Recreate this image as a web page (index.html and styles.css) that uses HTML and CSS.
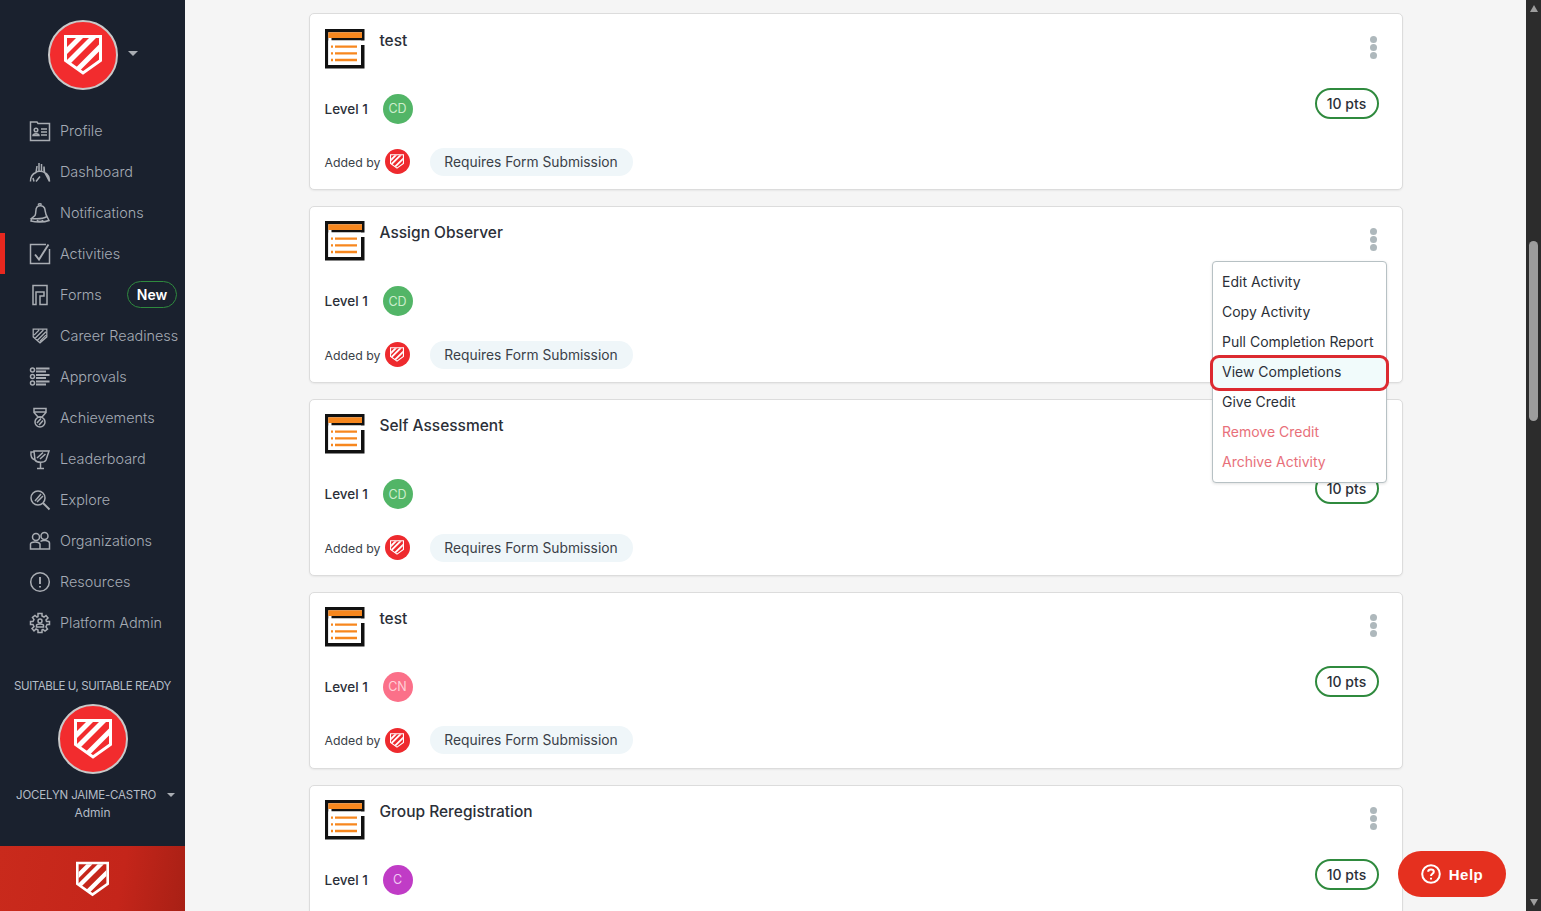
FILE: index.html
```html
<!DOCTYPE html>
<html lang="en">
<head>
<meta charset="utf-8">
<title>Activities</title>
<link rel="stylesheet" href="styles.css">
</head>
<body>
<svg class="defs" width="0" height="0" aria-hidden="true">
  <defs>
    <symbol id="shield" viewBox="0 0 38 40">
      <path d="M1.500 1.500H36.500V25.500L19 38L1.500 25.500Z" fill="none" stroke="#fff" stroke-width="3"/>
      <path d="M3 12 12 3H19L3 19ZM3 25 25 3H32L6 29ZM11.500 33 35 9.500V16.500L16.500 35Z" fill="#fff"/>
    </symbol>
    <symbol id="form" viewBox="0 0 40 40">
      <path d="M0 0H39.500V11.500H6.500V9H37V3.300H3.300V36H36V16H39.500V39.500H0Z" fill="#111"/>
      <rect x="3.300" y="11.500" width="32.700" height="24.500" fill="#fff"/>
      <rect x="3.300" y="3.300" width="33.700" height="5.700" fill="#f7871e"/>
      <path d="M10 17.700H32M10 24.300H32M10 31H32" stroke="#f7871e" stroke-width="2.300"/>
      <path d="M6 17.700H8M6 24.300H8M6 31H8" stroke="#f7871e" stroke-width="2.300"/>
    </symbol>
  </defs>
</svg>
<div class="app">
  <aside class="sidebar">
    <div class="brand">
      <div class="logo-circle"><svg class="logo-shield"><use href="#shield"/></svg></div>
      <span class="caret"></span>
    </div>
    <nav class="nav">
      <a class="nav-item"><svg class="ni" viewBox="0 0 20 20"><path d="M.5 1H7L8 2.500H19.500V19.500H.5Z"/><circle cx="6" cy="9" r="1.800"/><path d="M3 14.500C3 12 9 12 9 14.500ZM11 8H17M11 11H17M11 14H17"/></svg><span>Profile</span></a>
      <a class="nav-item"><svg class="ni" viewBox="0 0 20 20"><path d="M.5 19.500C.5 15 3 11.500 6 10.500L7 4M9 9V1M11.500 9V2M14 9V4.500L14.500 10.500C17.500 12 19.500 15.500 19.500 19.500ZM4 19.500 3 16M10 14.500 6 19.500"/><path d="M6 10C8 8.800 12 8.800 14.500 10.500"/></svg><span>Dashboard</span></a>
      <a class="nav-item"><svg class="ni" viewBox="0 0 20 20"><path d="M5 12.500C6.500 10 5 6 7 4C9 2 13 2.500 14.500 5C15.500 7.500 15 10.500 17 13.500C13 16 6 16 1.500 15.500ZM8 1.800C9 .5 11 .5 11.500 1.800M1.500 15.500 1 18C6 19.500 14 19.500 19 17.500L17 13.500M7 17C8 19 12 19 13 17"/></svg><span>Notifications</span></a>
      <a class="nav-item"><svg class="ni" viewBox="0 0 20 20"><path d="M19.500 5V19.500H.5V.5H16"/><path class="thick" d="M5 10.500 9 15.500 18.500 .5"/></svg><span>Activities</span></a>
      <a class="nav-item"><svg class="ni" viewBox="0 0 20 20"><path d="M6 19.500H3V.5H17V19.500H10V11H14V7H6ZM6 11V19.500"/></svg><span>Forms</span><span class="badge-new">New</span></a>
      <a class="nav-item"><svg class="ni ni-sm" viewBox="0 0 20 20"><path d="M2 2H18V11L10 18L2 11ZM3 9 9 3M4 13 14 3M7 15 17 5M10 16 17 9"/></svg><span>Career Readiness</span></a>
      <a class="nav-item"><svg class="ni" viewBox="0 0 20 20"><circle cx="2.500" cy="3" r="2"/><circle cx="2.500" cy="9.500" r="2"/><circle cx="2.500" cy="16" r="2"/><path class="thick" d="M6 1.500H19.500M6 4.500H16M6 8H19.500M6 11H16M6 14.500H19.500M6 17.500H16"/></svg><span>Approvals</span></a>
      <a class="nav-item"><svg class="ni" viewBox="0 0 20 20"><path d="M4 .5H16V4.500L12 9H8L4 4.500ZM4 4H16"/><circle cx="10" cy="14" r="5"/><path d="M7 15 11 10.500M9 17 13 12.500"/></svg><span>Achievements</span></a>
      <a class="nav-item"><svg class="ni" viewBox="0 0 20 20"><path d="M4 2H19L16 11C14.500 14 7 14 5 11ZM4 3H1C.5 7 2 10 5 11M7 19.500H14M10.500 13.500V19.500M7 9 13 3.500M10 10 15.500 5"/></svg><span>Leaderboard</span></a>
      <a class="nav-item"><svg class="ni" viewBox="0 0 20 20"><circle cx="8" cy="8" r="7"/><path class="thick" d="M13 13 19.500 19.500"/><path d="M5 11 11 4M7 12 13 6"/></svg><span>Explore</span></a>
      <a class="nav-item"><svg class="ni" viewBox="0 0 20 20"><circle cx="6" cy="6" r="3.500"/><circle cx="14.500" cy="5" r="3.500"/><path d="M.5 18V13C.5 10.500 9 10 10 13V18ZM10 18H19.500V12C19.500 9.500 12.500 8.500 10.500 10.500"/></svg><span>Organizations</span></a>
      <a class="nav-item"><svg class="ni" viewBox="0 0 20 20"><circle cx="10" cy="10" r="9.300"/><path class="thick" d="M10 5V12M10 14V15.500"/></svg><span>Resources</span></a>
      <a class="nav-item"><svg class="ni" viewBox="0 0 20 20"><path d="M8 .5H12V3L14 4 16 2.500 18 5 16 7 16.500 8.500H19.500V11.500H17L16 14 17.500 16 15 18 13 16.500 12 17V19.500H8V17L6 16 4 18 2 15.500 4 13.500 3 11.500H.5V8.500H3L4 6.500 2.500 4.500 5 2.500 7 4 8 3.500Z"/><circle cx="10" cy="8" r="2"/><path d="M6.500 14V12C7 10.500 13 10.500 13.500 12V14Z"/></svg><span>Platform Admin</span></a>
    </nav>
    <div class="org">SUITABLE U, SUITABLE READY</div>
    <div class="logo-circle logo-center"><svg class="logo-shield"><use href="#shield"/></svg></div>
    <div class="user"><span>JOCELYN JAIME-CASTRO</span><span class="caret caret-sm"></span></div>
    <div class="role">Admin</div>
    <div class="footer"><svg class="footer-shield"><use href="#shield"/></svg></div>
  </aside>

  <main class="main">
    <article class="card">
      <div class="row-top"><svg class="form-icon"><use href="#form"/></svg><h3 class="title">test</h3><div class="dots"><i></i><i></i><i></i></div></div>
      <div class="row-mid"><span class="level">Level 1</span><span class="avatar green">CD</span><span class="pts">10 pts</span></div>
      <div class="row-bot"><span class="added">Added by</span><span class="mini"><svg class="mini-shield"><use href="#shield"/></svg></span><span class="req">Requires Form Submission</span></div>
    </article>

    <article class="card card-menu">
      <div class="row-top"><svg class="form-icon"><use href="#form"/></svg><h3 class="title">Assign Observer</h3><div class="dots"><i></i><i></i><i></i></div></div>
      <div class="row-mid"><span class="level">Level 1</span><span class="avatar green">CD</span><span class="pts">10 pts</span></div>
      <div class="row-bot"><span class="added">Added by</span><span class="mini"><svg class="mini-shield"><use href="#shield"/></svg></span><span class="req">Requires Form Submission</span></div>
      <ul class="menu">
        <li>Edit Activity</li>
        <li>Copy Activity</li>
        <li>Pull Completion Report</li>
        <li class="hl">View Completions</li>
        <li>Give Credit</li>
        <li class="danger">Remove Credit</li>
        <li class="danger">Archive Activity</li>
      </ul>
    </article>

    <article class="card">
      <div class="row-top"><svg class="form-icon"><use href="#form"/></svg><h3 class="title">Self Assessment</h3><div class="dots"><i></i><i></i><i></i></div></div>
      <div class="row-mid"><span class="level">Level 1</span><span class="avatar green">CD</span><span class="pts">10 pts</span></div>
      <div class="row-bot"><span class="added">Added by</span><span class="mini"><svg class="mini-shield"><use href="#shield"/></svg></span><span class="req">Requires Form Submission</span></div>
    </article>

    <article class="card">
      <div class="row-top"><svg class="form-icon"><use href="#form"/></svg><h3 class="title">test</h3><div class="dots"><i></i><i></i><i></i></div></div>
      <div class="row-mid"><span class="level">Level 1</span><span class="avatar pink">CN</span><span class="pts">10 pts</span></div>
      <div class="row-bot"><span class="added">Added by</span><span class="mini"><svg class="mini-shield"><use href="#shield"/></svg></span><span class="req">Requires Form Submission</span></div>
    </article>

    <article class="card">
      <div class="row-top"><svg class="form-icon"><use href="#form"/></svg><h3 class="title">Group Reregistration</h3><div class="dots"><i></i><i></i><i></i></div></div>
      <div class="row-mid"><span class="level">Level 1</span><span class="avatar purple">C</span><span class="pts">10 pts</span></div>
    </article>
  </main>

  <div class="scrollbar">
    <span class="sb-arrow up"></span>
    <div class="sb-track"><div class="sb-thumb"></div></div>
    <span class="sb-arrow down"></span>
  </div>
</div>
<button class="help"><svg class="help-icon" viewBox="0 0 20 20"><circle cx="10" cy="10" r="8.800"/><path d="M7.200 7.800C7.200 4.800 12.800 4.800 12.800 7.800C12.800 9.800 10 9.800 10 12"/><path d="M10 13.800V15.400"/></svg><span>Help</span></button>
</body>
</html>
```
FILE: styles.css
```css
* { box-sizing: border-box; }
html, body { margin: 0; height: 100%; overflow: hidden; }
body { font-family: "Inter", "Liberation Sans", sans-serif; background: #f5f5f5; color: #2b2f38; }
.defs { position: absolute; }
.app { display: flex; height: 911px; }

.sidebar { width: 185px; flex: none; background: #1a212e; display: flex; flex-direction: column; align-items: stretch; overflow: hidden; }
.brand { display: flex; align-items: center; padding: 20px 0 0 48px; height: 90px; }
.logo-circle { width: 70px; height: 70px; border-radius: 50%; background: #f22c2e; border: 2px solid #c9c9c9; display: flex; align-items: center; justify-content: center; flex: none; }
.logo-shield { width: 38px; height: 40px; }
.caret { width: 0; height: 0; border-left: 5px solid transparent; border-right: 5px solid transparent; border-top: 5px solid #a9adb3; margin-left: 10px; margin-top: -4px; }
.nav { display: flex; flex-direction: column; margin-top: 20px; }
.nav-item { height: 41px; display: flex; align-items: center; padding-left: 30px; color: #a5abb5; font-size: 14.400px; font-weight: 300; position: relative; }
.nav-item span:first-of-type { margin-left: 10px; }
.nav-item:nth-child(4)::before { content: ""; position: absolute; left: 0; top: 0; width: 5px; height: 41px; background: #e8281f; }
.ni { width: 20px; height: 20px; fill: none; stroke: #a9adb3; stroke-width: 1.500; flex: none; overflow: visible; }
.ni-sm { transform: scale(.85); }
.ni .thick { stroke-width: 1.900; }
.badge-new { margin-left: auto; margin-right: 8px; width: 50px; height: 27px; border: 1.500px solid #2f8a3e; border-radius: 14px; color: #fff; font-weight: 600; font-size: 14px; display: flex; align-items: center; justify-content: center; }
.org { margin-top: 34px; color: #b4bcc6; font-size: 11.500px; letter-spacing: -.42px; text-align: center; white-space: nowrap; height: 18px; line-height: 18px; }
.logo-center { margin: 9px auto 0; }
.user { margin-top: 12px; display: flex; align-items: center; padding-left: 16px; color: #b4bcc6; font-size: 11.500px; letter-spacing: -.17px; height: 18px; white-space: nowrap; }
.caret-sm { margin-left: 11px; margin-top: 0; border-left-width: 4px; border-right-width: 4px; border-top-width: 4px; }
.role { color: #b4bcc6; font-size: 12px; text-align: center; height: 18px; line-height: 18px; }
.footer { margin-top: auto; height: 65px; background: linear-gradient(100deg, #c92a1c, #c4251a 65%, #a82015); display: flex; align-items: center; justify-content: center; }
.footer-shield { width: 33px; height: 36px; }

.main { flex: 1; min-width: 0; padding-top: 13.400px; display: flex; flex-direction: column; align-items: center; gap: 16px; overflow: hidden; }
.card { width: 1094px; height: 176.800px; flex: none; background: #fff; border: 1px solid #dcdcdc; border-radius: 5px; box-shadow: 0 1px 2px rgba(0,0,0,.06); padding: 14.200px 15px 0; position: relative; }
.row-top { display: flex; align-items: flex-start; height: 40px; }
.form-icon { width: 40px; height: 40px; flex: none; }
.title { margin: 1px 0 0 15px; font-size: 15.500px; line-height: 22px; font-weight: 500; color: #2b2f38; }
.dots { margin-left: auto; margin-right: 10px; margin-top: 7px; display: flex; flex-direction: column; gap: 1px; }
.dots i { width: 7px; height: 7px; border-radius: 50%; background: #aeb8bc; }
.row-mid { display: flex; align-items: center; margin-top: 20px; height: 40px; padding-right: 8px; }
.level { font-size: 13.500px; font-weight: 500; width: 58px; color: #2b2f38; }
.avatar { width: 30px; height: 30px; border-radius: 50%; display: flex; align-items: center; justify-content: center; font-size: 12.500px; }
.green { background: #52b567; color: #cdeecd; }
.pink { background: #fb7089; color: #ffd0d8; }
.purple { background: #c03cc6; color: #f0c8f2; }
.pts { margin-left: auto; margin-top: -11px; width: 64px; height: 31px; border: 2px solid #2f8a3e; border-radius: 16px; font-size: 14px; font-weight: 500; display: flex; align-items: center; justify-content: center; color: #2b2f38; }
.row-bot { display: flex; align-items: center; margin-top: 19.400px; height: 28px; }
.added { font-size: 12.300px; width: 60px; color: #3a3f48; padding-top: 1px; }
.mini { width: 25px; height: 25px; border-radius: 50%; background: #ee2a2e; display: flex; align-items: center; justify-content: center; }
.mini-shield { width: 14px; height: 15px; }
.req { margin-left: 20px; width: 203px; height: 28px; border-radius: 14px; background: #eff6f9; font-size: 13.800px; display: flex; align-items: center; justify-content: center; color: #3a3f48; }

.card-menu { z-index: 2; }
.menu { position: absolute; left: 902px; top: 54px; width: 175px; height: 222px; margin: 0; padding: 6px 0; list-style: none; background: #fff; border: 1px solid #b7c1c4; border-radius: 4px; box-shadow: 0 1px 3px rgba(0,0,0,.12); }
.menu li { height: 30px; line-height: 28px; padding-left: 9.500px; font-size: 14px; color: #2b2f38; white-space: nowrap; position: relative; }
.menu .danger { color: #e8707a; }
.menu .hl { background: #f1fbfb; }
.menu .hl::after { content: ""; position: absolute; left: -3px; right: -3px; top: -3px; bottom: -3px; border: 3px solid #dc2a30; border-radius: 9px; }

.scrollbar { width: 15px; flex: none; background: #2c2c2c; display: flex; flex-direction: column; align-items: center; }
.sb-track { flex: 1; width: 100%; padding-top: 224px; display: flex; justify-content: center; }
.sb-thumb { width: 9px; height: 180px; background: #9d9d9d; border-radius: 5px; }
.sb-arrow { width: 0; height: 0; border-left: 4.500px solid transparent; border-right: 4.500px solid transparent; margin: 5px 0; }
.sb-arrow.up { border-bottom: 7px solid #9d9d9d; }
.sb-arrow.down { border-top: 7px solid #9d9d9d; }

.help { position: fixed; left: 1398px; top: 851px; width: 108px; height: 46px; border: 0; border-radius: 23px; background: #e5301f; color: #fff; font-family: "Liberation Sans", sans-serif; font-weight: 700; font-size: 15px; letter-spacing: .5px; display: flex; align-items: center; justify-content: center; gap: 8px; padding: 0; }
.help-icon { width: 20px; height: 20px; fill: none; stroke: #fff; stroke-width: 2; }
```
